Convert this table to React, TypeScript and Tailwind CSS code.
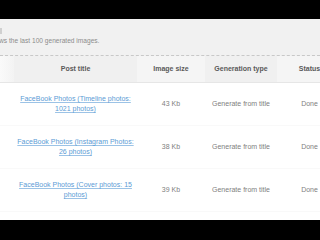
export default function App() {
  const rows = [
    { title: 'FaceBook Photos (Timeline photos: 1021 photos)', size: '43 Kb' },
    { title: 'FaceBook Photos (Instagram Photos: 26 photos)', size: '38 Kb' },
    { title: 'FaceBook Photos (Cover photos: 15 photos)', size: '39 Kb' },
  ];

  return (
    <div
      className="w-[320px] h-[240px] overflow-hidden bg-white flex flex-col text-[7px] leading-[10px]"
      style={{ fontFamily: '"Liberation Sans", Arial, sans-serif' }}
    >
      {/* top bar */}
      <div className="h-[19px] bg-black shrink-0" />

      {/* info panel */}
      <div className="h-[37px] shrink-0 bg-[#f1f1f1] border-b border-dashed border-[#c8c8c8] flex flex-col">
        <div className="h-[18px] pt-[9px]">
          <div className="w-[2px] h-[6px] bg-[#d0d0d0]" />
        </div>
        <div className="text-[6.6px] leading-[8px] text-[#8c8c8c] whitespace-nowrap -ml-[1px]">
          ws the last 100 generated images.
        </div>
      </div>

      {/* table */}
      <div className="w-[342px] shrink-0">
        <div className="flex h-[27px] items-center font-bold text-[#5a5a5a] border-b border-[#e6e6e6] text-center">
          <div className="w-[14px] h-full bg-gradient-to-r from-[#fafafa] to-[#f3f3f3]" />
          <div className="w-[123px] h-full bg-[#f0f0f0] flex items-center justify-center">Post title</div>
          <div className="w-[68px] h-full bg-[#f5f5f5] flex items-center justify-center">Image size</div>
          <div className="w-[72px] h-full bg-[#f0f0f0] flex items-center justify-center">Generation type</div>
          <div className="w-[65px] h-full bg-[#f5f5f5] flex items-center justify-center">Status</div>
        </div>

        {rows.map((r) => (
          <div key={r.size} className="flex h-[43px] items-center text-center text-[#808080] border-b border-[#f9f9f9]">
            <div className="w-[14px]" />
            <div className="w-[123px] px-[2px]">
              <a href="#" className="text-[#5b9bd5] underline decoration-[#9cc3e6]">{r.title}</a>
            </div>
            <div className="w-[68px]">{r.size}</div>
            <div className="w-[72px]">Generate from title</div>
            <div className="w-[65px]">Done</div>
          </div>
        ))}
      </div>

      <div className="flex-1" />
      <div className="h-[20px] bg-black shrink-0" />
    </div>
  );
}
